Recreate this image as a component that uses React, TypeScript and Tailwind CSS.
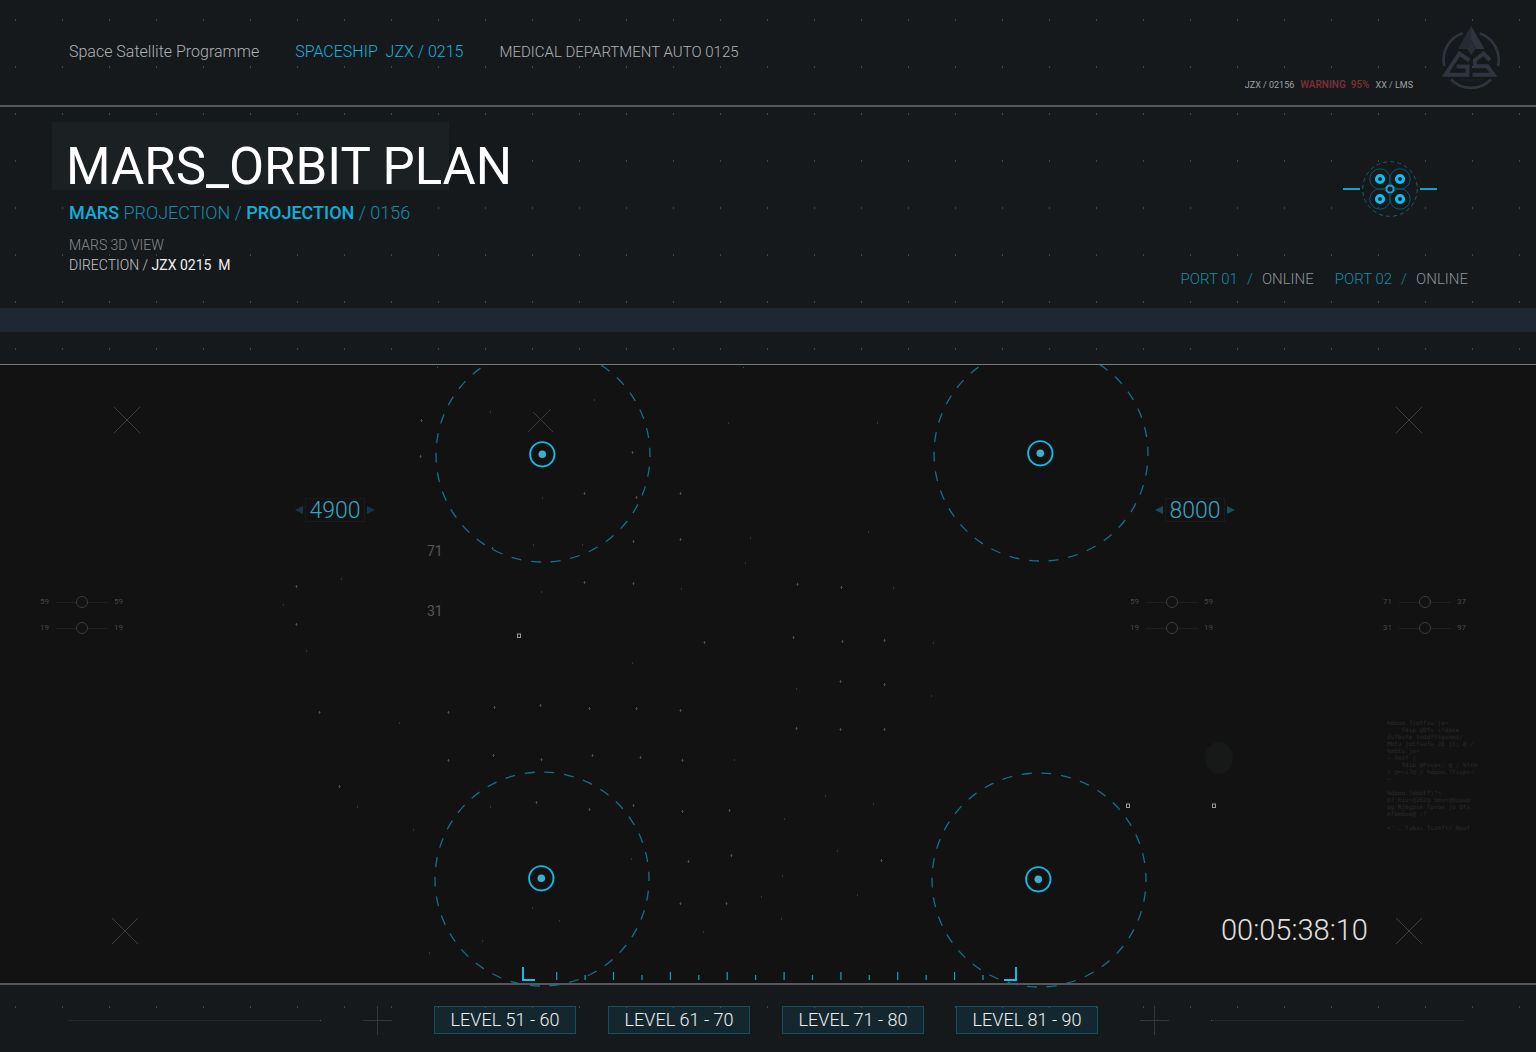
import { useState } from "react";

const STAGE_W = 1536;
const STAGE_H = 618;

const pos = (x: number, y: number) => ({
  left: `${(x / STAGE_W) * 100}%`,
  top: `${(y / STAGE_H) * 100}%`,
});

const brightStars: [number, number][] = [
  [421, 55], [420, 91], [632, 87], [584, 128], [636, 132], [680, 128], [633, 176], [680, 174],
  [584, 217], [633, 218], [492, 183], [797, 219], [841, 222], [704, 277], [793, 272], [842, 276],
  [884, 275], [296, 221], [296, 259], [319, 347], [339, 421], [448, 347], [494, 342], [540, 340],
  [589, 343], [636, 343], [680, 345], [448, 395], [493, 390], [541, 394], [592, 390], [640, 392],
  [682, 395], [536, 437], [589, 444], [633, 440], [682, 446], [729, 445], [688, 496], [731, 490],
  [680, 538], [726, 538], [840, 316], [884, 319], [796, 363], [840, 364], [884, 364], [881, 495],
];

const dimStars: [number, number][] = [
  [490, 47], [594, 35], [728, 58], [877, 58], [542, 133], [750, 173], [868, 167], [533, 180],
  [582, 180], [745, 198], [541, 227], [681, 224], [893, 223], [341, 214], [283, 240], [306, 286],
  [632, 298], [796, 324], [933, 278], [931, 331], [399, 358], [357, 442], [413, 465], [490, 442],
  [734, 395], [825, 431], [873, 439], [784, 454], [837, 486], [631, 494], [782, 511], [857, 530],
  [761, 532], [781, 554], [703, 567], [532, 543], [559, 556], [482, 576], [429, 588],
];

const orbits = [
  { cx: 543, cy: 90, ix: 542, iy: 89 },
  { cx: 1041, cy: 89, ix: 1040, iy: 88 },
  { cx: 542, cy: 514, ix: 541, iy: 513 },
  { cx: 1039, cy: 515, ix: 1038, iy: 514 },
];

const crosses: [number, number][] = [
  [126, 54],
  [1408, 54],
  [124, 565],
  [1408, 565],
];

const markers: [number, number][] = [
  [519, 270],
  [1128, 440],
  [1214, 440],
];

const code = `%dpoo.?jotfsu\`je<
    fdip @Ofx sfdpse
dsfbufe tvddfttgvmmz/
Mbtu jotfsufe JE jt; @ /
%mbtu\`je<
~ fmtf |
    fdip @Fssps; @ / %trm
/ @=cs?@ / %dpoo.?fssps<
~

%dpoo.?dmptf)*<
@? hiu>@262@ bmu>@Qipup
pg Njmgpse Tpvoe jo Ofx
Afbmboe@ :?

=".. Tubsu Tuzmft/ Npwf`;

function Logo() {
  return (
    <svg viewBox="0 0 72 76" className="h-[76px] w-[72px] shrink-0" role="img" aria-label="AGS Transport">
      <g fill="none" stroke="#2f343f" strokeWidth="2.6">
        <path d="M26.5 15.2A28 28 0 0 0 8.3 48" />
        <path d="M43.5 15.2A28 28 0 0 1 62 48" />
        <path d="M15 61.5A28 28 0 0 0 55 61.5" />
      </g>
      <path d="M35.3 8 22 31h8.500l5-9 4.500 9H48.500z" fill="#2f343f" />
      <path d="M35.300 8 22 31h8.500l4.800-9z" fill="#262a33" />
      <path d="M35.300 22 31 31l4.300 6 4.300-6z" fill="#282d36" />
      <g fill="none" stroke="#2f343f" strokeWidth="4">
        <path d="M33.500 42.500 23.500 35.500 9.500 56.700H31.500V48.500H20.500" />
        <path d="M54 42 47.500 35.500 38.800 42.500V48.300H51.500L57.500 56.700H36.500" />
      </g>
      <text x="35.500" y="64" textAnchor="middle" fontSize="4" fill="#262b34" fontFamily="Roboto, sans-serif">
        TRANSPORT
      </text>
    </svg>
  );
}

function ClusterIcon() {
  const quads: [number, number][] = [
    [38, 18],
    [58, 18],
    [38, 38],
    [58, 38],
  ];
  return (
    <svg viewBox="0 0 96 56" className="h-14 w-24" fill="none" aria-hidden="true">
      <circle cx="48" cy="28" r="27.300" stroke="#176173" strokeDasharray="4 3.150" />
      {quads.map(([x, y]) => (
        <g key={`${x}-${y}`}>
          <circle cx={x} cy={y} r="10.200" stroke="#0f5466" />
          <circle cx={x} cy={y} r="3.500" stroke="#10bdec" strokeWidth="3.200" />
        </g>
      ))}
      <circle cx="48" cy="28" r="3.600" fill="#15191c" stroke="#14a9d4" strokeWidth="2" />
      <path d="M1 28h17M78 28h17" stroke="#12a2cc" strokeWidth="2.200" />
    </svg>
  );
}

function StageDrawing() {
  return (
    <svg viewBox="0 0 1536 626" className="pointer-events-none absolute inset-x-0 top-0 w-full" fill="none" aria-hidden="true">
      {crosses.map(([x, y]) => (
        <path key={`${x}-${y}`} d={`M${x - 12} ${y - 12}l26 26M${x + 14} ${y - 12}l-26 26`} stroke="#3e3f3f" />
      ))}
      <path d="M528 67l23-23M533 47l20 20" stroke="#3a3a3a" />
      <ellipse cx="1219" cy="393" rx="14" ry="16" fill="#171919" />
      {brightStars.map(([x, y]) => (
        <path key={`${x}-${y}`} d={`M${x + 0.5} ${y - 1}v3M${x - 0.5} ${y + 0.5}h2`} stroke="#4c4d4d" />
      ))}
      {dimStars.map(([x, y]) => (
        <rect key={`${x}-${y}`} x={x} y={y - 1} width="1" height="2" fill="#303131" />
      ))}
      <rect x="437" y="2" width="1" height="1" fill="#126377" />
      <rect x="743" y="2" width="1" height="1" fill="#126377" />
      {orbits.map((o) => (
        <g key={`${o.cx}-${o.cy}`}>
          <circle cx={o.cx} cy={o.cy} r="107" stroke="#157089" strokeWidth="1.300" strokeDasharray="10 9.773" strokeDashoffset="8" />
          <circle cx={o.ix + 0.3} cy={o.iy + 0.3} r="12.200" stroke="#13b8e4" strokeWidth="1.900" />
          <circle cx={o.ix + 0.3} cy={o.iy + 0.3} r="3.800" fill="#3cafcc" />
        </g>
      ))}
      {markers.map(([x, y]) => (
        <rect key={`${x}-${y}`} x={x - 1.5} y={y - 1} width="3" height="3.500" stroke="#9b9b9b" />
      ))}
      <path d="M523 602v13h12M1016 602v13h-12" stroke="#1cc0ea" strokeWidth="1.900" />
      {Array.from({ length: 16 }, (_, i) => (
        <path key={i} d={`M${(556.7 + i * 28.42).toFixed(1)} ${i % 2 ? 610 : 607}V615`} stroke="#1995b5" strokeWidth="1.300" />
      ))}
    </svg>
  );
}

function Stepper({ x, initial, dim }: { x: number; initial: number; dim?: boolean }) {
  const [value, setValue] = useState(initial);
  const arrow = dim ? "#0f3a46" : "#14505f";
  return (
    <div className="absolute flex -translate-y-1/2 items-center gap-0.5" style={pos(x, 145)}>
      <button type="button" aria-label="Decrease" onClick={() => setValue(value - 100)}>
        <svg viewBox="0 0 8 8" className="size-2">
          <path d="M8 0v8L0 4z" fill={arrow} />
        </svg>
      </button>
      <output className="h-6 w-[60px] border border-[#161b1d] text-center text-[23px] leading-6 font-light text-[#3aa5c2]">
        {value}
      </output>
      <button type="button" aria-label="Increase" onClick={() => setValue(value + 100)}>
        <svg viewBox="0 0 8 8" className="size-2">
          <path d="M0 0v8l8-4z" fill={arrow} />
        </svg>
      </button>
    </div>
  );
}

function Gauge({ low, high }: { low: number; high: number }) {
  return (
    <label className="flex h-3 items-center gap-1 text-[8px] leading-3 font-normal text-[#464747]">
      <span className="w-3">{low}</span>
      <input
        type="range"
        aria-label={`Range ${low} to ${high}`}
        defaultValue={50}
        className="h-3 w-[52px] appearance-none bg-[linear-gradient(#1e2020,#1e2020)] bg-[length:100%_1px] bg-center bg-no-repeat [&::-webkit-slider-thumb]:size-3 [&::-webkit-slider-thumb]:appearance-none [&::-webkit-slider-thumb]:rounded-full [&::-webkit-slider-thumb]:border [&::-webkit-slider-thumb]:border-[#3c3d3d] [&::-webkit-slider-thumb]:bg-[#121212]"
      />
      <span className="ml-0.5 w-3">{high}</span>
    </label>
  );
}

function GaugePair({ x, rows }: { x: number; rows: [number, number][] }) {
  return (
    <div className="absolute flex flex-col gap-[14px]" style={pos(x, 231)}>
      {rows.map(([a, b]) => (
        <Gauge key={a} low={a} high={b} />
      ))}
    </div>
  );
}

function Port({ id }: { id: string }) {
  return (
    <p className="flex gap-[9px]">
      <span className="text-[#188aa4]">PORT {id}</span>
      <span className="text-[#188aa4]">/</span>
      <span className="text-[#909294]">ONLINE</span>
    </p>
  );
}

function Plus() {
  return (
    <svg viewBox="0 0 29 29" className="size-[29px] shrink-0" aria-hidden="true">
      <path d="M14.500 0v29M0 14.500h29" stroke="#343739" />
    </svg>
  );
}

export default function App() {
  const levels = ["51 - 60", "61 - 70", "71 - 80", "81 - 90"];
  const [level, setLevel] = useState("");
  return (
    <div className="flex min-h-screen flex-col bg-[#15191c] bg-[radial-gradient(circle_at_15.500px_20px,#404547_1px,transparent_1px)] bg-[length:47px_47px] font-['Roboto',sans-serif] font-light">
      <header className="flex h-[107px] items-start justify-between border-b-2 border-[#55575a] pr-7 pl-[69px]">
        <nav className="flex gap-9 pt-[41px] text-[16px] leading-[22px] whitespace-pre">
          <a href="#programme" className="text-[#b0b2b3]">Space Satellite Programme</a>
          <a href="#spaceship" className="text-[#17b2dd]">SPACESHIP  JZX / 0215</a>
          <a href="#medical" className="text-[15px] text-[#b0b2b3]">MEDICAL DEPARTMENT AUTO 0125</a>
        </nav>
        <div className="flex gap-[23px] pt-[18px]">
          <p className="flex gap-1.5 pt-[61px] text-[9px] leading-3 font-normal whitespace-pre text-[#a0a2a3]">
            <span>JZX / 02156</span>
            <strong className="text-[10px] font-semibold text-[#7b2f33]">WARNING  95%</strong>
            <span>XX / LMS</span>
          </p>
          <Logo />
        </div>
      </header>

      <section className="flex h-[201px] justify-between pr-[68px] pl-[52px]">
        <div className="pt-[15px]">
          <h1 className="h-[68px] w-[397px] bg-[#1b2022] pt-[13px] pl-[14px] text-[51px] leading-[64px] font-normal whitespace-nowrap text-white">
            MARS_ORBIT PLAN
          </h1>
          <p className="mt-3 pl-[17px] text-[18px] leading-[22px] whitespace-pre text-[#178aa9]">
            <b className="font-medium text-[#14add8]">MARS</b> PROJECTION / <b className="font-medium text-[#14add8]">PROJECTION</b> / 0156
          </p>
          <p className="mt-[11px] pl-[17px] text-[14px] leading-5 text-[#8a8c8e]">MARS 3D VIEW</p>
          <p className="pl-[17px] text-[14px] leading-5 whitespace-pre text-[#c4c5c6]">
            DIRECTION / <b className="font-normal text-[#f0f0f0]">JZX 0215  M</b>
          </p>
        </div>
        <div className="flex flex-col items-end justify-between pt-[54px] pb-[18px]">
          <div className="pr-[30px]">
            <ClusterIcon />
          </div>
          <div className="flex gap-[21px] text-[15px] leading-[22px]">
            <Port id="01" />
            <Port id="02" />
          </div>
        </div>
      </section>

      <div className="h-6 bg-[#1f2832]" />
      <div className="h-[33px] border-b border-[#77797a]" />

      <main className="relative aspect-[1536/618] w-full bg-[#121212]">
        <StageDrawing />
        <Stepper x={295} initial={4900} dim />
        <Stepper x={1155} initial={8000} />
        <span className="absolute -translate-y-1/2 text-[14px] leading-4 font-normal text-[#555656]" style={pos(427, 186)}>71</span>
        <span className="absolute -translate-y-1/2 text-[14px] leading-4 font-normal text-[#555656]" style={pos(427, 246)}>31</span>
        <GaugePair x={40} rows={[[59, 59], [19, 19]]} />
        <GaugePair x={1130} rows={[[59, 59], [19, 19]]} />
        <GaugePair x={1383} rows={[[71, 37], [31, 97]]} />
        <pre className="absolute font-['DejaVu_Sans_Mono',monospace] text-[6px] leading-[7px] font-normal text-[#2b2d2d]" style={pos(1387, 354)}>
          {code}
        </pre>
        <time className="absolute -translate-y-1/2 text-[29px] leading-8 font-light whitespace-nowrap text-[#e0e0e0]" style={pos(1221, 565)}>
          00:05:38:10
        </time>
      </main>

      <footer className="flex flex-1 items-center gap-[42px] border-t-2 border-[#55575a] pt-[3px] pr-[72px] pl-[68px]">
        <div className="h-px flex-1 border-r border-[#555] bg-[#24262a]" />
        <Plus />
        <div className="flex gap-8">
          {levels.map((name) => (
            <button
              key={name}
              type="button"
              aria-pressed={level === name}
              onClick={() => setLevel(name)}
              className="h-7 w-[142px] border border-[#12505f] bg-[#14a4cc]/10 text-[18px] leading-[26px] whitespace-nowrap text-[#f0f1f1]"
            >
              LEVEL {name}
            </button>
          ))}
        </div>
        <Plus />
        <div className="h-px flex-1 border-l border-[#555] bg-[#24262a]" />
      </footer>
    </div>
  );
}
